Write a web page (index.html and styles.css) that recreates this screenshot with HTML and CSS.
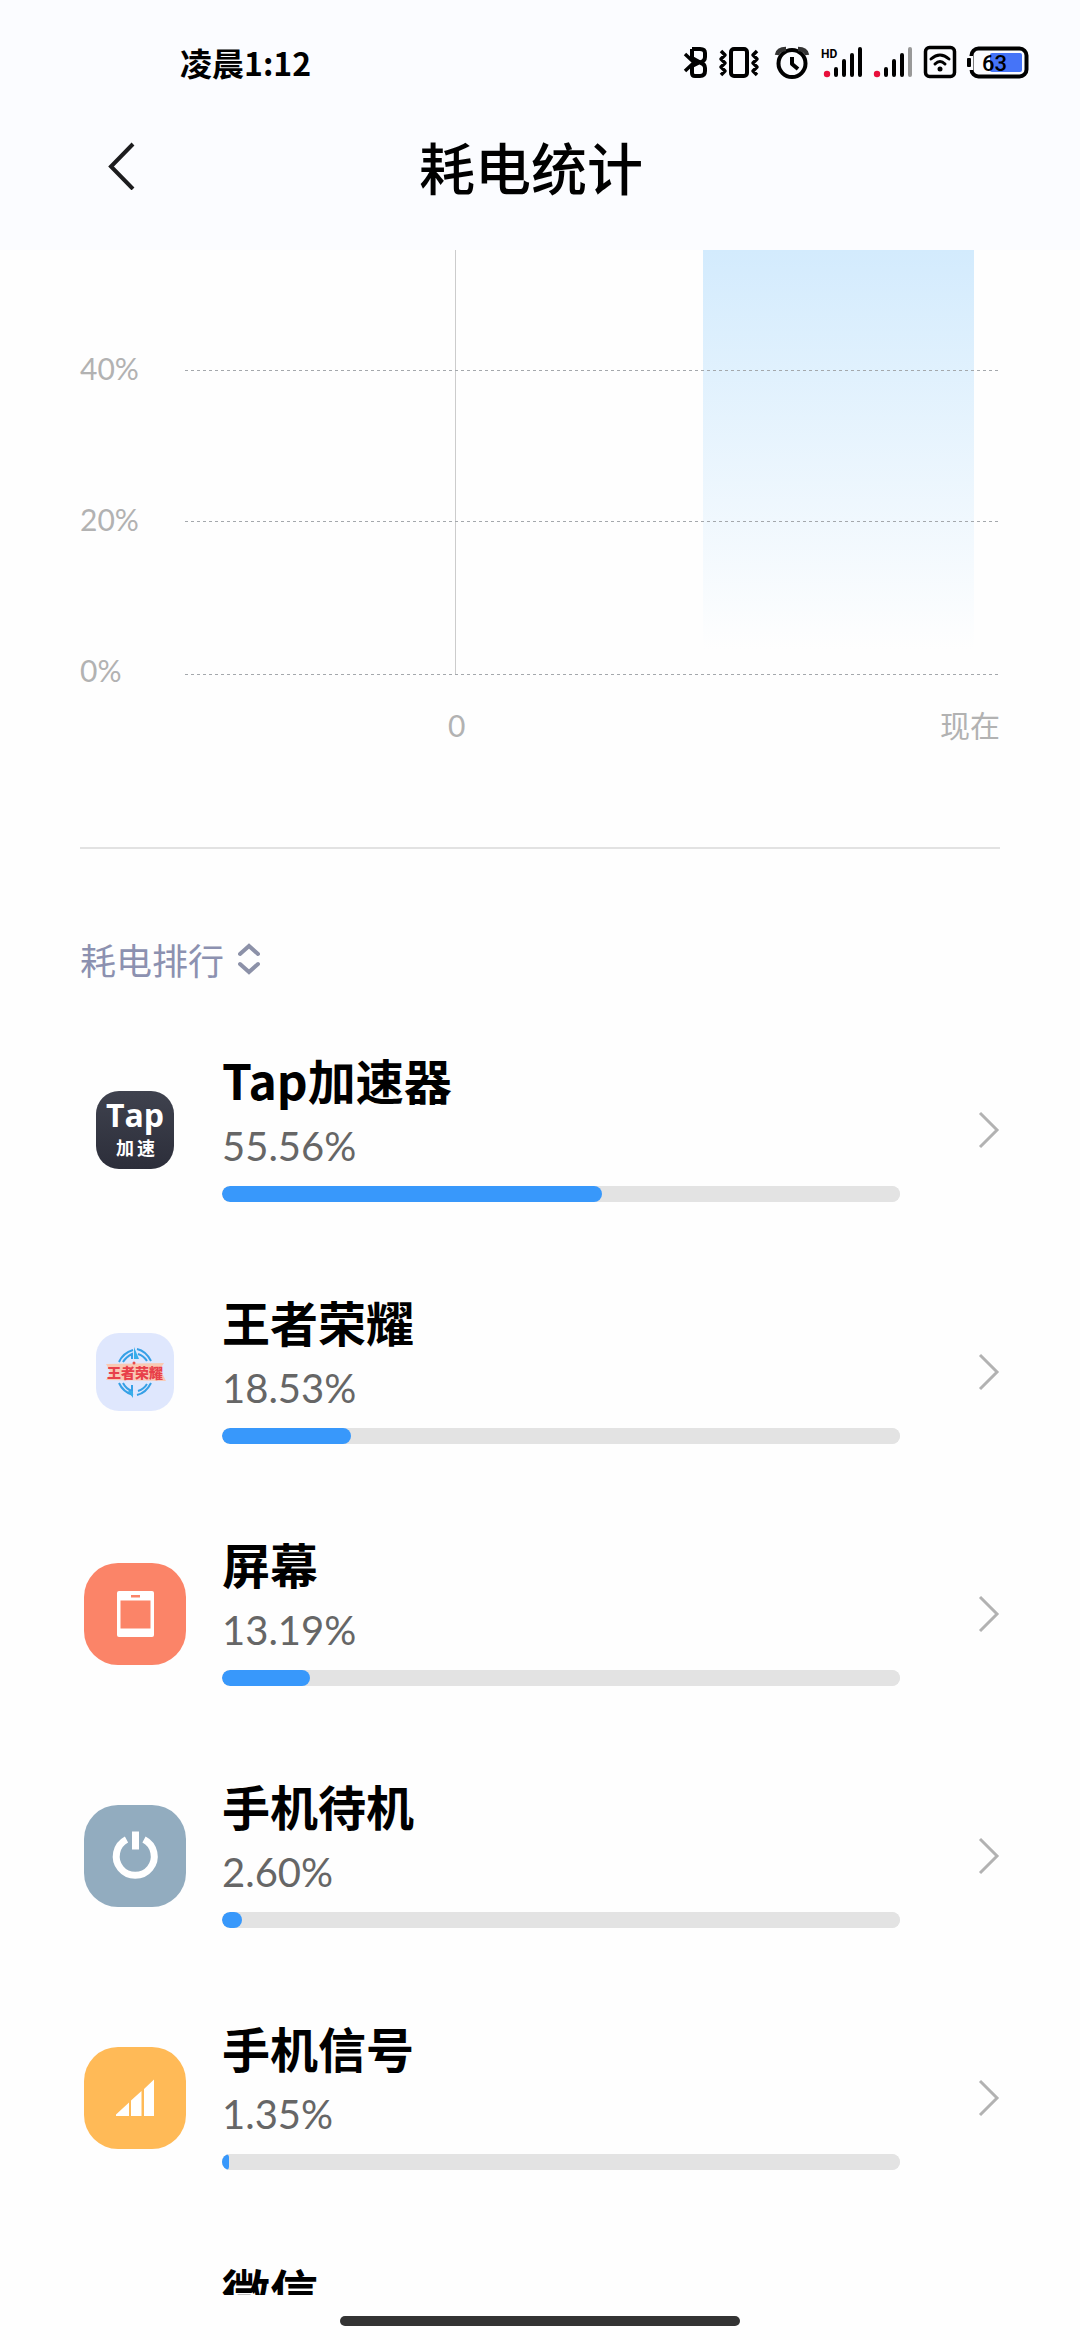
FILE: index.html
```html
<!DOCTYPE html>
<html lang="zh-CN">
<head>
<meta charset="utf-8">
<meta name="viewport" content="width=device-width, initial-scale=1">
<title>耗电统计</title>
<link rel="stylesheet" href="styles.css">
</head>
<body>
<header class="header">
  <div class="status">
    <span class="clock">凌晨1:12</span>
    <svg class="status-icons" viewBox="680 40 352 44" width="352" height="44" role="img" aria-label="状态图标">
      <g fill="none" stroke="#000" stroke-width="4" stroke-linejoin="round">
        <path d="M692 49h8q5 0 5 4v4q0 4-5 5.500q5 1.500 5 5.500v3q0 5-5 5h-5q-3 0-3-3v-7l8-4M692 49v9l8 4.500"/>
        <path d="M685 54l9 8.500-9 8.500" stroke-width="3.500"/>
        <rect x="731" y="49" width="16" height="27" rx="3"/>
        <path d="M721 51l4 4-4 4 4 4-4 4 4 4-4 4M757 51l-4 4 4 4-4 4 4 4-4 4 4 4" stroke-width="3.500"/>
        <circle cx="792" cy="63.500" r="13.500"/>
        <path d="M792 57v7l6 5"/>
        <path d="M777 55q1-6 9-6M807 55q-1-6-9-6" stroke="#333" stroke-width="4.500"/>
      </g>
      <text x="821" y="58" class="hd">HD</text>
      <g stroke="#000" stroke-width="4" stroke-linecap="round">
        <path d="M836 69v6M844 61v14M852 55v20M860 49v26M886 69v6M894 61v14M902 55v20"/>
        <path d="M910 49v26" stroke="#999"/>
      </g>
      <circle cx="827" cy="74" r="3.200" fill="#e8103c"/>
      <circle cx="877" cy="74" r="3.200" fill="#e8103c"/>
      <g fill="none" stroke="#000" stroke-linecap="round">
        <rect x="925.500" y="47.500" width="29" height="29" rx="4" stroke-width="3.500"/>
        <path d="M931 59q9-8 18 0M935 64q5-5 10 0" stroke-width="3"/>
        <rect x="971.500" y="48.500" width="55" height="28" rx="7" stroke-width="4"/>
      </g>
      <circle cx="940" cy="69" r="2.500"/>
      <path d="M966 56h7v14h-7z" fill="#fbfcff"/>
      <rect x="967" y="58" width="4" height="9" rx="1"/>
      <rect x="990" y="53" width="32" height="19" rx="2" fill="#4574f8"/>
      <text x="982" y="71" class="charge">63</text>
    </svg>
  </div>
  <div class="titlebar">
    <button class="back" type="button" aria-label="返回">
      <svg viewBox="0 0 30 48" width="30" height="48"><path d="M27 2L5 24.500 27 47" fill="none" stroke="#1c1c1e" stroke-width="4"/></svg>
    </button>
    <h1 class="title">耗电统计</h1>
  </div>
</header>

<main class="content">
  <section class="chart" aria-label="电量图表">
    <div class="y-axis"><span>40%</span><span>20%</span><span>0%</span></div>
    <div class="plot">
      <div class="band"></div>
      <div class="midnight"></div>
      <div class="line line-40"></div>
      <div class="line line-20"></div>
      <div class="line line-0"></div>
    </div>
    <div class="x-axis"><span class="x-zero">0</span><span class="x-now">现在</span></div>
  </section>

  <section class="ranking">
    <button class="sort" type="button">耗电排行
      <svg viewBox="0 0 22 32" width="22" height="32"><path d="M2 11l9-8 9 8M2 21l9 8 9-8" fill="none" stroke="#8c91a8" stroke-width="4" stroke-linecap="round"/></svg>
    </button>
    <ul class="list">
      <li><a class="row" href="#tap">
        <svg class="icon" viewBox="0 0 102 102"><defs><linearGradient id="dark" x2="0" y2="1"><stop stop-color="#3f424e"/><stop offset="1" stop-color="#2c2e3a"/></linearGradient></defs><rect x="12" y="12" width="78" height="78" rx="23" fill="url(#dark)"/><text x="51" y="48" class="tap-name">Tap</text><text x="41" y="76" class="tap-sub">加</text><text x="62" y="76" class="tap-sub">速</text></svg>
        <span class="info"><span class="name">Tap加速器</span><span class="percent">55.56%</span><progress class="bar" value="56" max="100" aria-label="Tap加速器"></progress></span>
        <svg class="chevron" viewBox="0 0 22 38"><path d="M2 2l17 17L2 36"/></svg>
      </a></li>
      <li><a class="row" href="#honor">
        <svg class="icon" viewBox="0 0 102 102"><rect x="12" y="12" width="78" height="78" rx="23" fill="#dfe7fd"/><g fill="none" stroke="#36a0e6" stroke-width="2"><path d="M35 41q4-9 14-12M53 28q9 2 14 12M39 41q3-5 9-8v5M54 33q6 2 9 7"/><path d="M35 62q4 9 14 12M53 74q9-2 14-12M39 62q3 6 9 8v-6M54 70q6-2 9-7"/></g><path d="M50 26l5 12h-5zM49 77l-5-7h5z" fill="#38aeea"/><path d="M22 43l58-1-4 6 6 12-60-1 5-7z" fill="#f9c9b4"/><text x="51" y="57" class="honor-name">王者荣耀</text><circle cx="50" cy="42" r="1.500" fill="#e94a4a"/></svg>
        <span class="info"><span class="name">王者荣耀</span><span class="percent">18.53%</span><progress class="bar" value="19" max="100" aria-label="王者荣耀"></progress></span>
        <svg class="chevron" viewBox="0 0 22 38"><path d="M2 2l17 17L2 36"/></svg>
      </a></li>
      <li><a class="row" href="#screen">
        <svg class="icon" viewBox="0 0 102 102"><rect width="102" height="102" rx="34" fill="#fb8468"/><rect x="33" y="28" width="37" height="46" rx="2" fill="#fff"/><path d="M36.500 37.500h30v28h-30zM47 32h9v2.500h-9z" fill="#fb8468"/></svg>
        <span class="info"><span class="name">屏幕</span><span class="percent">13.19%</span><progress class="bar" value="13" max="100" aria-label="屏幕"></progress></span>
        <svg class="chevron" viewBox="0 0 22 38"><path d="M2 2l17 17L2 36"/></svg>
      </a></li>
      <li><a class="row" href="#standby">
        <svg class="icon" viewBox="0 0 102 102"><rect width="102" height="102" rx="34" fill="#92acbf"/><path d="M42.500 34.500a19 19 0 1 0 17.500 0" fill="none" stroke="#fff" stroke-width="7"/><path d="M48 26.500h7v18h-7z" fill="#fff"/></svg>
        <span class="info"><span class="name">手机待机</span><span class="percent">2.60%</span><progress class="bar" value="3" max="100" aria-label="手机待机"></progress></span>
        <svg class="chevron" viewBox="0 0 22 38"><path d="M2 2l17 17L2 36"/></svg>
      </a></li>
      <li><a class="row" href="#signal">
        <svg class="icon" viewBox="0 0 102 102"><rect width="102" height="102" rx="34" fill="#ffba57"/><path d="M32 69v-1.500L45 55.500V69zM47 69V53.500L57.500 44v25zM60 69V42l10-9.500V69z" fill="#fff"/></svg>
        <span class="info"><span class="name">手机信号</span><span class="percent">1.35%</span><progress class="bar" value="1" max="100" aria-label="手机信号"></progress></span>
        <svg class="chevron" viewBox="0 0 22 38"><path d="M2 2l17 17L2 36"/></svg>
      </a></li>
      <li><a class="row" href="#wechat">
        <span class="icon"></span>
        <span class="info"><span class="name">微信</span></span>
      </a></li>
    </ul>
  </section>
</main>
<footer class="gesture"><div class="pill"></div></footer>
</body>
</html>
```
FILE: styles.css
```css
* { box-sizing: border-box; }

body {
  margin: 0;
  height: 100vh;
  display: flex;
  flex-direction: column;
  overflow: hidden;
  background: #fefefe;
  color: #000;
  font-family: "Noto Sans CJK SC", sans-serif;
}

button {
  border: 0;
  padding: 0;
  background: none;
  font-family: inherit;
  cursor: pointer;
}

svg { display: block; flex: none; }

/* Header */
.header {
  flex: none;
  height: 250px;
  background: #fbfcff;
}
.status {
  display: flex;
  justify-content: space-between;
  align-items: center;
  padding: 40px 48px 0 180px;
}
.clock {
  font-size: 32px;
  line-height: 44px;
  font-weight: 700;
}
.hd { font: 700 12px Roboto, sans-serif; }
.charge { font: 500 22px Roboto, sans-serif; }
.titlebar {
  display: grid;
  grid-template-columns: 1fr auto 1fr;
  align-items: center;
  padding: 38px 124px 0 106px;
}
.back { justify-self: start; }
.title {
  margin: 0;
  font-size: 56px;
  line-height: 88px;
  font-weight: 500;
}

.content {
  flex: 1;
  min-height: 0;
  overflow: hidden;
  padding: 0 80px;
}

/* Chart */
.chart {
  display: grid;
  grid-template-columns: 105px 1fr;
  padding-bottom: 102px;
  border-bottom: 2px solid #e2e2e2;
  color: #b2b2b2;
  font-family: Lato, "Noto Sans CJK SC", sans-serif;
  font-size: 30px;
  line-height: 40px;
}
.y-axis {
  display: grid;
  grid-template-rows: 138px 151px 151px;
  align-items: end;
}
.plot {
  display: grid;
  grid-template-columns: 271fr 246fr 271fr 26fr;
  grid-template-rows: 121px 151px 153px;
}
.band {
  grid-area: 1 / 3 / 4 / 4;
  background: linear-gradient(#d3ebfd, #fefefe 94%);
}
.midnight {
  grid-area: 1 / 1 / 4 / 2;
  border-right: 1px solid #ccc;
}
.line {
  grid-column: 1 / 5;
  align-self: end;
  height: 1px;
  background: repeating-linear-gradient(90deg, #a4a8ac 0 3px, transparent 3px 6px);
}
.line-40 { grid-row: 1; }
.line-20 { grid-row: 2; }
.line-0 { grid-row: 3; }
.x-axis {
  grid-column: 2;
  display: grid;
  grid-template-columns: 2fr 1fr;
  padding-top: 15px;
}
.x-zero { text-align: center; }
.x-now { text-align: right; }

/* Ranking */
.sort {
  display: flex;
  align-items: center;
  gap: 14px;
  margin: 82px 0 22px;
  color: #8c91b0;
  font-size: 36px;
  line-height: 56px;
}
.list {
  margin: 0;
  padding: 0;
  list-style: none;
}
.row {
  display: flex;
  align-items: center;
  height: 242px;
  padding: 0 0 0 4px;
  color: inherit;
  text-decoration: none;
}
.icon {
  width: 102px;
  height: 102px;
  flex: none;
}
.info {
  flex: 1;
  align-self: stretch;
  display: flex;
  flex-direction: column;
  padding-top: 38px;
  margin: 0 78px 0 36px;
}
.name {
  font-size: 48px;
  line-height: 64px;
  font-weight: 700;
}
.percent {
  color: #666;
  font-family: Lato, sans-serif;
  font-size: 40px;
  line-height: 70px;
}
.bar {
  appearance: none;
  display: block;
  width: 100%;
  height: 16px;
  margin-top: 5px;
  border: 0;
  border-radius: 8px;
  overflow: hidden;
  background: #e3e3e3;
}
.bar::-webkit-progress-bar { background: #e3e3e3; border-radius: 8px; }
.bar::-webkit-progress-value { background: #3898fb; border-radius: 8px; }
.chevron {
  width: 22px;
  height: 38px;
  fill: none;
  stroke: #b2b2b2;
  stroke-width: 3;
}
.tap-name {
  fill: #fff;
  font: 700 32px "Open Sans", sans-serif;
  text-anchor: middle;
}
.tap-sub {
  fill: #fff;
  font: 700 18px "Noto Sans CJK SC", sans-serif;
  text-anchor: middle;
}
.honor-name {
  fill: #e83f4a;
  font: 900 14px "Noto Sans CJK SC", sans-serif;
  text-anchor: middle;
}

/* Gesture bar */
.gesture {
  flex: none;
  display: flex;
  justify-content: center;
  height: 45px;
  padding-top: 21px;
}
.pill {
  width: 37%;
  height: 10px;
  border-radius: 5px;
  background: #333;
}
```
